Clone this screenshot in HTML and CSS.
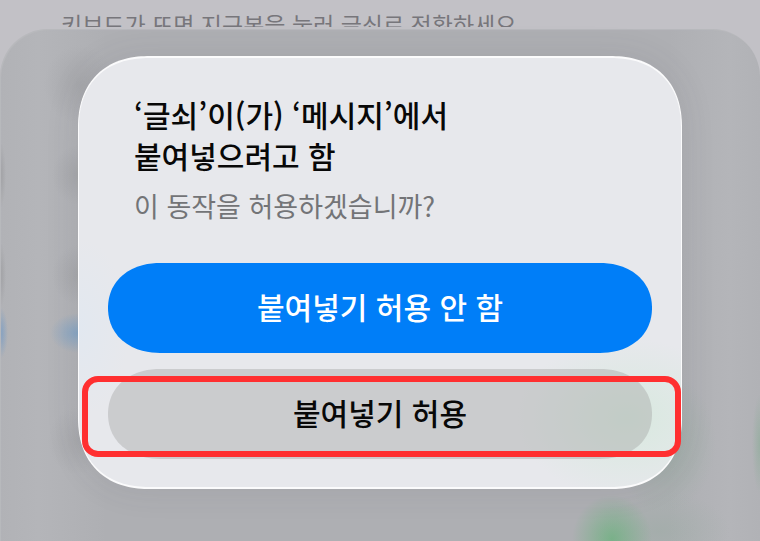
FILE: index.html
```
<!DOCTYPE html>
<html lang="ko">
<head>
<meta charset="utf-8">
<meta name="viewport" content="width=device-width, initial-scale=1">
<title>붙여넣기 허용</title>
<link rel="stylesheet" href="styles.css">
</head>
<body>
<p class="hint">키보드가 뜨면 지구본을 눌러 글쇠로 전환하세요</p>
<main class="sheet">
  <section class="alert" role="alertdialog" aria-labelledby="alert-title" aria-describedby="alert-message">
    <div class="copy">
      <h1 class="title" id="alert-title">‘글쇠’이(가) ‘메시지’에서<br>붙여넣으려고 함</h1>
      <p class="message" id="alert-message">이 동작을 허용하겠습니까?</p>
    </div>
    <div class="actions">
      <button class="button primary" type="button">붙여넣기 허용 안 함</button>
      <div class="marked">
        <button class="button secondary" type="button">붙여넣기 허용</button>
      </div>
    </div>
  </section>
</main>
</body>
</html>
```
FILE: styles.css
```
* {
  box-sizing: border-box;
}

body {
  display: flex;
  flex-direction: column;
  gap: 2px;
  min-height: 100vh;
  margin: 0;
  overflow-x: hidden;
  background: #c2c1c6;
  font-family: "Noto Sans CJK KR", "Noto Sans", sans-serif;
}

.hint {
  height: 27px;
  margin: 0;
  padding: 8px 61px 0;
  overflow: hidden;
  color: #77767b;
  font-size: 23px;
  line-height: 32px;
  white-space: nowrap;
}

.sheet {
  flex: 1;
  padding: 27px 24px 52px;
  border-radius: 48px 48px 0 0;
  background:
    radial-gradient(ellipse 40px 44px at 612px 510px, rgb(95 178 116 / 65%), transparent),
    radial-gradient(ellipse 52px 70px at 664px 414px, rgb(135 168 148 / 40%), transparent),
    radial-gradient(ellipse 70px 40px at 660px 502px, rgb(135 168 148 / 25%), transparent),
    radial-gradient(ellipse 8px 50px at 100% 415px, rgb(125 170 140 / 45%), transparent),
    radial-gradient(ellipse 8px 26px at 0 304px, rgb(105 150 200 / 70%), transparent),
    radial-gradient(ellipse 28px 20px at 78px 304px, rgb(115 158 200 / 70%), transparent),
    radial-gradient(ellipse 6px 34px at 0 146px, rgb(140 140 142 / 50%), transparent),
    radial-gradient(ellipse 6px 34px at 0 246px, rgb(140 140 142 / 50%), transparent),
    radial-gradient(ellipse 36px 40px at 80px 56px, rgb(150 151 155 / 40%), transparent),
    radial-gradient(ellipse 26px 30px at 78px 146px, rgb(145 146 149 / 35%), transparent),
    radial-gradient(ellipse 26px 30px at 78px 246px, rgb(145 146 149 / 35%), transparent),
    radial-gradient(ellipse 30px 34px at 78px 412px, rgb(145 146 149 / 30%), transparent),
    linear-gradient(90deg, #b1b2b6, #b4b5b9 5%, #aeafb3 14%, #aeafb3 88%, #b4b5b9 96%, #b1b2b6);
  box-shadow: inset 1px 1px 1px #b9babd;
}

.alert {
  max-width: 604px;
  margin: 0 auto;
  padding: 36px 29px 28px;
  border: 2px solid #fbfbfc;
  border-width: 2px 1px;
  border-radius: 72px;
  corner-shape: superellipse(1.2);
  background:
    radial-gradient(ellipse 110px 80px at calc(100% - 54px) 360px, #d8e9df, transparent),
    radial-gradient(ellipse 50px 90px at 0 270px, #e2e8f0, transparent),
    #e7e8ec;
  box-shadow: 0 0 34px rgb(70 72 78 / 10%);
}

.copy {
  padding: 0 26px;
}

.title,
.message {
  margin: 0;
}

.title {
  color: #080808;
  font-size: 30px;
  font-weight: 500;
  line-height: 41px;
}

.message {
  margin-top: 10px;
  color: #737477;
  font-size: 27px;
  line-height: 40px;
}

.actions {
  display: grid;
  gap: 16px;
  margin-top: 37px;
}

.button {
  display: block;
  width: 100%;
  height: 90px;
  padding: 0 0 4px;
  border: 0;
  border-radius: 52px / 45px;
  corner-shape: superellipse(1.1);
  font: 500 30px/40px "Noto Sans CJK KR", "Noto Sans", sans-serif;
  cursor: pointer;
}

.primary {
  background: #007ef8;
  color: #fff;
}

.secondary {
  background: rgb(157 158 158 / 38%);
  color: #080808;
}

.marked {
  position: relative;
}

.marked::after {
  content: "";
  position: absolute;
  inset: 7px -29px 2px -26px;
  border: 6px solid #ff2f30;
  border-radius: 16px;
  pointer-events: none;
}
```
